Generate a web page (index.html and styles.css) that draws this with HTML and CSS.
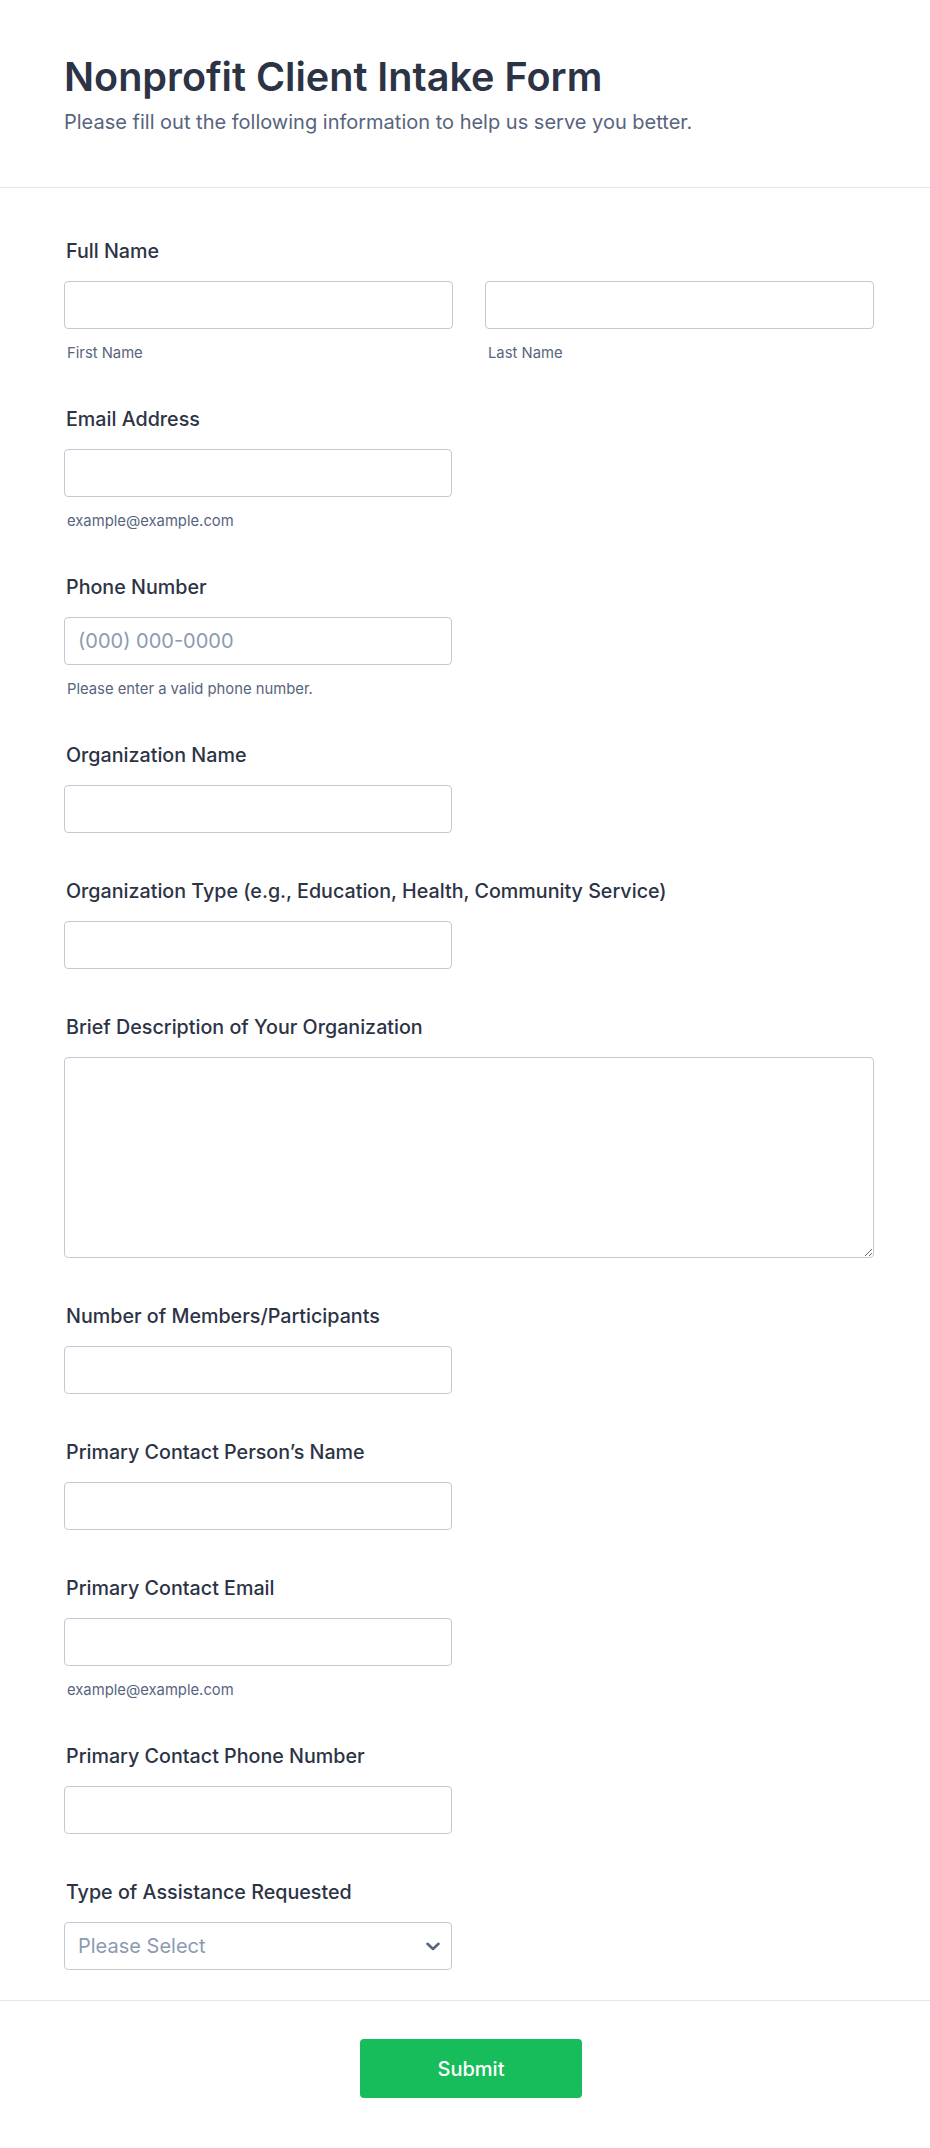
FILE: index.html
```html
<!DOCTYPE html>
<html lang="en">
<head>
<meta charset="utf-8">
<title>Nonprofit Client Intake Form</title>
<link rel="stylesheet" href="styles.css">
</head>
<body>
<main class="form">
  <header class="form-header">
    <h1 class="form-title">Nonprofit Client Intake Form</h1>
    <p class="form-subtitle">Please fill out the following information to help us serve you better.</p>
  </header>

  <section class="form-body">
    <div class="field">
      <label class="field-label">Full Name</label>
      <div class="name-grid">
        <div>
          <input class="input input-full" type="text">
          <span class="sublabel">First Name</span>
        </div>
        <div>
          <input class="input input-full" type="text">
          <span class="sublabel">Last Name</span>
        </div>
      </div>
    </div>

    <div class="field">
      <label class="field-label">Email Address</label>
      <input class="input" type="email">
      <span class="sublabel">example@example.com</span>
    </div>

    <div class="field">
      <label class="field-label">Phone Number</label>
      <input class="input" type="tel" placeholder="(000) 000-0000">
      <span class="sublabel">Please enter a valid phone number.</span>
    </div>

    <div class="field">
      <label class="field-label">Organization Name</label>
      <input class="input" type="text">
    </div>

    <div class="field">
      <label class="field-label">Organization Type (e.g., Education, Health, Community Service)</label>
      <input class="input" type="text">
    </div>

    <div class="field">
      <label class="field-label">Brief Description of Your Organization</label>
      <textarea class="textarea"></textarea>
    </div>

    <div class="field">
      <label class="field-label">Number of Members/Participants</label>
      <input class="input" type="text">
    </div>

    <div class="field">
      <label class="field-label">Primary Contact Person’s Name</label>
      <input class="input" type="text">
    </div>

    <div class="field">
      <label class="field-label">Primary Contact Email</label>
      <input class="input" type="email">
      <span class="sublabel">example@example.com</span>
    </div>

    <div class="field">
      <label class="field-label">Primary Contact Phone Number</label>
      <input class="input" type="tel">
    </div>

    <div class="field field-last">
      <label class="field-label">Type of Assistance Requested</label>
      <div class="select-wrap">
        <select class="select">
          <option>Please Select</option>
        </select>
        <svg class="chevron" width="14" height="9" viewBox="0 0 14 9" aria-hidden="true">
          <path d="M1.5 1.8 L7 7 L12.5 1.8" fill="none" stroke="#57647e" stroke-width="2.6" stroke-linecap="round" stroke-linejoin="round"/>
        </svg>
      </div>
    </div>
  </section>

  <footer class="form-footer">
    <button class="submit" type="button">Submit</button>
  </footer>
</main>
</body>
</html>
```

FILE: styles.css
```css
* {
  box-sizing: border-box;
}

html, body {
  margin: 0;
  padding: 0;
  background: #ffffff;
}

body {
  font-family: Inter, "Noto Sans", "Liberation Sans", sans-serif;
  color: #2c3345;
}

.form {
  width: 930px;
}

.form-header {
  padding: 53px 56px 50px 64px;
  border-bottom: 1px solid #e3e5ec;
}

.form-title {
  margin: 0;
  font-size: 39.6px;
  line-height: 48px;
  font-weight: 600;
  color: #2c3345;
}

.form-subtitle {
  margin: 7px 0 0;
  font-size: 20px;
  line-height: 29px;
  font-weight: 400;
  color: #57647e;
}

.form-body {
  padding: 47px 56px 30px 64px;
  border-bottom: 1px solid #e3e5ec;
}

.field {
  margin-bottom: 42px;
}

.field-last {
  margin-bottom: 0;
}

.field-label {
  display: block;
  padding-left: 2px;
  font-size: 19.7px;
  line-height: 32px;
  font-weight: 500;
  color: #2c3345;
  margin-bottom: 14px;
}

.name-grid {
  display: grid;
  grid-template-columns: 1fr 1fr;
  column-gap: 32px;
}

.input,
.select,
.textarea {
  display: block;
  width: 388px;
  height: 48px;
  margin: 0;
  padding: 0 13px;
  border: 1px solid #c3c8d4;
  border-radius: 4px;
  background: #ffffff;
  font-family: Inter, "Noto Sans", "Liberation Sans", sans-serif;
  font-size: 20px;
  color: #2c3345;
  outline: none;
}

.input-full {
  width: 100%;
}

.input::placeholder {
  color: #8d9ab1;
}

.textarea {
  width: 810px;
  height: 201px;
  padding: 10px 13px;
  resize: vertical;
}

.sublabel {
  display: block;
  margin-top: 17px;
  padding-left: 3px;
  font-size: 14.8px;
  line-height: 15px;
  color: #57647e;
}

.select-wrap {
  position: relative;
  width: 388px;
}

.select {
  appearance: none;
  -webkit-appearance: none;
  color: #8d9ab1;
  padding-right: 40px;
}

.chevron {
  position: absolute;
  right: 12px;
  top: 20px;
  pointer-events: none;
}

.form-footer {
  display: flex;
  justify-content: center;
  padding: 38px 54px 50px 66px;
}

.submit {
  width: 222px;
  height: 59px;
  border: none;
  border-radius: 4px;
  background: #18bd5b;
  color: #ffffff;
  font-family: Inter, "Noto Sans", "Liberation Sans", sans-serif;
  font-size: 20px;
  font-weight: 500;
  cursor: pointer;
}
```
